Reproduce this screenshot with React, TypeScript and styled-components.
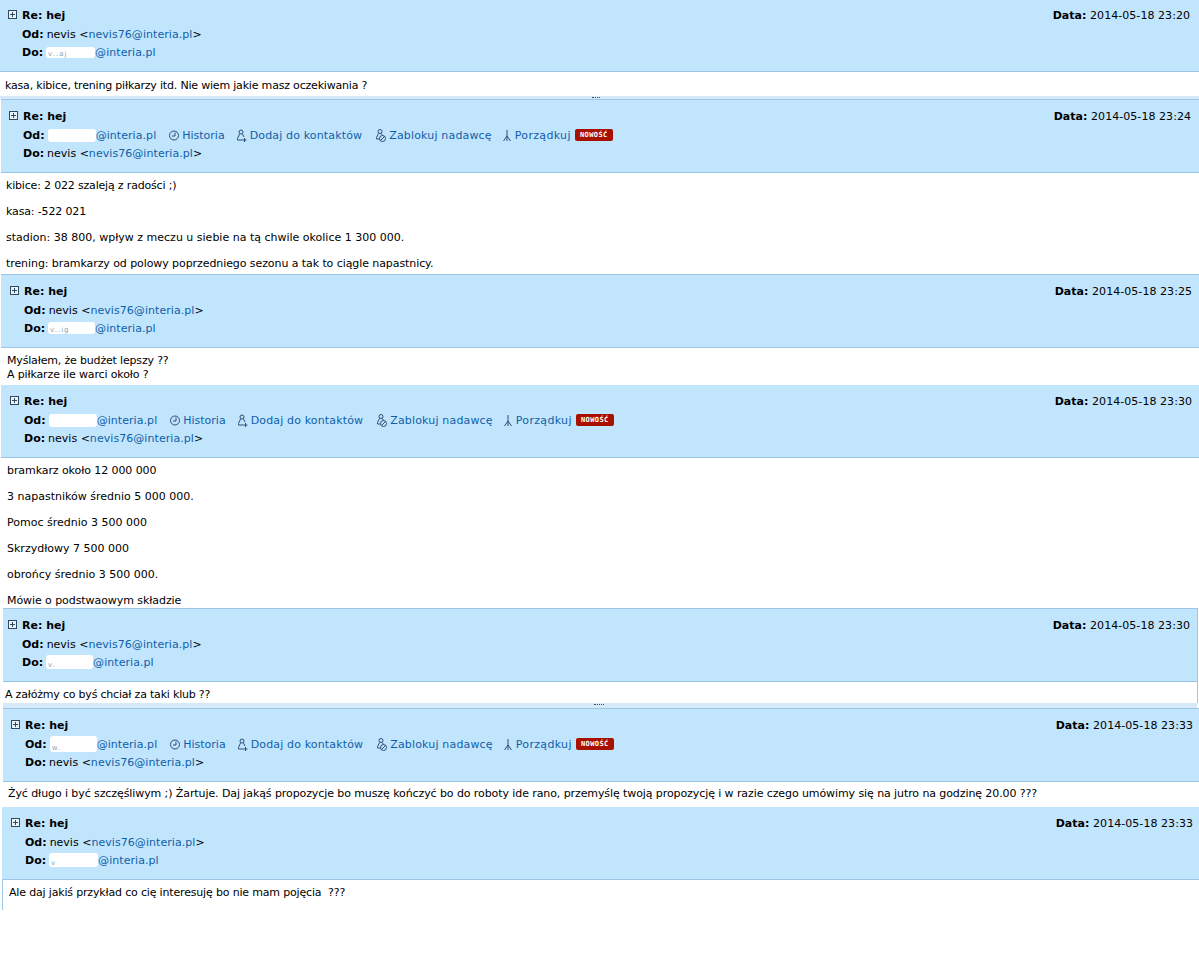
import React from 'react'
import styled, { createGlobalStyle } from 'styled-components'

const GlobalStyle = createGlobalStyle`
  html, body {
    margin: 0;
    padding: 0;
    background: #fff;
  }
  body {
    font-family: "DejaVu Sans", Tahoma, sans-serif;
    font-size: 11px;
    color: #000;
  }
`

const Page = styled.div`
  width: 1199px;
  height: 977px;
  overflow: hidden;
`

const Message = styled.div<{ $edge: number; $inset: number }>`
  margin-left: ${p => p.$edge}px;
  margin-right: ${p => p.$inset}px;
`

const Header = styled.div<{ $top: number; $border: boolean; $pad: number; $end: number; $closed?: boolean }>`
  display: flex;
  justify-content: space-between;
  background: #c2e5fe;
  border-bottom: 1px solid #9cc6e6;
  border-top: ${p => (p.$border ? '1px solid #9cc6e6' : 'none')};
  border-right: ${p => (p.$closed ? '1px solid #9cc6e6' : 'none')};
  padding: ${p => p.$top}px ${p => p.$end}px 10px ${p => p.$pad}px;
`

const Fields = styled.div`
  display: flex;
  flex-direction: column;
`

const TitleRow = styled.div`
  display: flex;
  align-items: center;
  height: 18px;
  margin-bottom: 1px;
  font-weight: bold;
`

const ExpandBox = styled.svg`
  width: 9px;
  height: 9px;
  margin: -2px 5px 0 0;
  flex: none;
`

const FieldRow = styled.div`
  display: flex;
  align-items: center;
  height: 18px;
  margin-left: 14px;
  white-space: pre;
`

const Label = styled.b`
  margin-right: 3px;
`

const Mail = styled.a`
  color: #0f5fa8;
  text-decoration: none;
  letter-spacing: 0.06px;
`

const Redacted = styled.span<{ $width: number; $height: number }>`
  display: inline-flex;
  align-items: flex-end;
  width: ${p => p.$width}px;
  height: ${p => p.$height}px;
  background: #fff;
  border-radius: 3px;
  overflow: hidden;
`

const Remnant = styled.span`
  color: #7f9fb8;
  font-size: 7px;
  line-height: 7px;
  letter-spacing: 1px;
  padding-left: 2px;
`

const Action = styled.a<{ $gap: number; $tracking?: number }>`
  display: inline-flex;
  align-items: center;
  margin-left: ${p => p.$gap}px;
  color: #0f5fa8;
  text-decoration: none;
  letter-spacing: ${p => p.$tracking ?? 0}px;
`

const ActionIcon = styled.svg`
  width: 10px;
  height: 13px;
  margin-right: 3px;
  flex: none;
`

const NewBadge = styled.span`
  margin-left: 4px;
  width: 38px;
  height: 12px;
  line-height: 12px;
  background: #a81000;
  border-radius: 2px;
  color: #fff;
  font-family: "DejaVu Sans Mono", monospace;
  font-size: 7px;
  font-weight: bold;
  letter-spacing: 0.4px;
  text-align: center;
`

const DateText = styled.div`
  height: 18px;
  margin-top: 1px;
  line-height: 18px;
  white-space: pre;
  letter-spacing: 0.05px;
`

const Body = styled.div<{ $top: number; $bottom: number; $pad: number; $gap: number; $rule?: boolean; $closed?: boolean }>`
  display: flex;
  flex-direction: column;
  gap: ${p => p.$gap}px;
  padding: ${p => p.$top}px 0 ${p => p.$bottom}px ${p => p.$pad}px;
  border-left: ${p => (p.$rule ? '1px solid #9cc6e6' : 'none')};
  border-right: ${p => (p.$closed ? '1px solid #9cc6e6' : 'none')};
  background: #fff;
`

const Line = styled.div<{ $tracking: number }>`
  height: 14px;
  line-height: 14px;
  white-space: pre;
  letter-spacing: ${p => p.$tracking}px;
`

const Strip = styled.div<{ $height: number; $closed?: boolean }>`
  display: flex;
  height: ${p => p.$height}px;
  background: #d6e9f8;
  margin-right: ${p => (p.$closed ? 1 : 0)}px;
`

const Grip = styled.span<{ $at: number; $width: number }>`
  width: ${p => p.$width}px;
  height: 1px;
  margin: 1px 0 0 ${p => p.$at}px;
  border-top: 1px dotted #38506a;
`

const PlusBox = () => (
  <ExpandBox viewBox="0 0 9 9">
    <rect x=".5" y=".5" width="8" height="8" fill="#e8f3fb" stroke="#33495e" />
    <path d="M2 4.5h5M4.5 2v5" stroke="#33495e" fill="none" />
  </ExpandBox>
)

const ClockIcon = () => (
  <ActionIcon viewBox="0 0 10 13">
    <circle cx="5" cy="6.5" r="4.5" fill="none" stroke="#2a4f78" />
    <path d="M6 3.5v3.5H3" fill="none" stroke="#2a4f78" />
  </ActionIcon>
)

const AddPersonIcon = () => (
  <ActionIcon viewBox="0 0 10 13">
    <circle cx="4" cy="3" r="2" fill="none" stroke="#2a4f78" />
    <path d="M2.5 5L.5 9.5v1.5h5M5.5 5L7 8" fill="none" stroke="#2a4f78" />
    <path d="M5.5 11h4M7.5 9v4" fill="none" stroke="#2a4f78" />
  </ActionIcon>
)

const BlockPersonIcon = () => (
  <ActionIcon viewBox="0 0 10 13">
    <circle cx="4" cy="2.5" r="2" fill="none" stroke="#2a4f78" />
    <path d="M2.5 4.5L.5 8.5V10h3M5.5 4.5l1 2" fill="none" stroke="#2a4f78" />
    <circle cx="6.5" cy="9.5" r="3" fill="none" stroke="#2a4f78" />
    <path d="M4.5 11.5l4-4" fill="none" stroke="#2a4f78" />
  </ActionIcon>
)

const BroomIcon = () => (
  <ActionIcon viewBox="0 0 10 13">
    <path d="M5 1v6M5 7L1.5 12M5 7v5M5 7l3.5 5" fill="none" stroke="#2a4f78" />
  </ActionIcon>
)

type Mailbox = { width: number; height: number; remnant: string } | null

type TextLine = { text: string; tracking?: number }

type Item = {
  id: number
  edge: number
  inset?: number
  text: number
  pad: number
  end: number
  top: number
  border: boolean
  date: string
  sender: Mailbox
  recipient: Mailbox
  lines: TextLine[]
  gap: number
  bodyTop: number
  bodyBottom: number
  rule?: boolean
  strip?: { height: number; at: number; width: number }
}

const items: Item[] = [
  {
    id: 1, edge: 0, text: 5, pad: 8, end: 9, top: 6, border: false, date: '2014-05-18 23:20',
    sender: null, recipient: { width: 49, height: 11, remnant: 'v..aj' },
    lines: [{ text: 'kasa, kibice, trening piłkarzy itd. Nie wiem jakie masz oczekiwania ?', tracking: -0.19 }],
    gap: 12, bodyTop: 7, bodyBottom: 3, strip: { height: 3, at: 592, width: 8 },
  },
  {
    id: 2, edge: 1, text: 5, pad: 8, end: 8, top: 7, border: true, date: '2014-05-18 23:24',
    sender: { width: 48, height: 13, remnant: '' }, recipient: null,
    lines: [
      { text: 'kibice: 2 022 szaleją z radości ;)', tracking: -0.18 },
      { text: 'kasa: -522 021', tracking: -0.14 },
      { text: 'stadion: 38 800, wpływ z meczu u siebie na tą chwile okolice 1 300 000.' },
      { text: 'trening: bramkarzy od polowy poprzedniego sezonu a tak to ciągle napastnicy.', tracking: -0.08 },
    ],
    gap: 12, bodyTop: 6, bodyBottom: 3,
  },
  {
    id: 3, edge: 1, text: 6, pad: 9, end: 7, top: 7, border: true, date: '2014-05-18 23:25',
    sender: null, recipient: { width: 47, height: 12, remnant: 'v..ig' },
    lines: [
      { text: 'Myślałem, że budżet lepszy ??', tracking: -0.17 },
      { text: 'A piłkarze ile warci około ?', tracking: -0.14 },
    ],
    gap: 0, bodyTop: 6, bodyBottom: 3,
  },
  {
    id: 4, edge: 1, text: 6, pad: 9, end: 7, top: 7, border: false, date: '2014-05-18 23:30',
    sender: { width: 48, height: 13, remnant: '' }, recipient: null,
    lines: [
      { text: 'bramkarz około 12 000 000', tracking: -0.08 },
      { text: '3 napastników średnio 5 000 000.' },
      { text: 'Pomoc średnio 3 500 000' },
      { text: 'Skrzydłowy 7 500 000' },
      { text: 'obrońcy średnio 3 500 000.' },
      { text: 'Mówie o podstwaowym składzie', tracking: -0.07 },
    ],
    gap: 12, bodyTop: 6, bodyBottom: 0,
  },
  {
    id: 5, edge: 3, inset: 1, text: 2, pad: 5, end: 7, top: 7, border: true, date: '2014-05-18 23:30',
    sender: null, recipient: { width: 47, height: 14, remnant: 'v.' },
    lines: [{ text: 'A załóżmy co byś chciał za taki klub ??', tracking: -0.2 }],
    gap: 12, bodyTop: 6, bodyBottom: 1, strip: { height: 5, at: 591, width: 10 },
  },
  {
    id: 6, edge: 3, text: 5, pad: 8, end: 6, top: 7, border: true, date: '2014-05-18 23:33',
    sender: { width: 47, height: 16, remnant: 'w.' }, recipient: null,
    lines: [{ text: 'Żyć długo i być szczęśliwym ;) Żartuje. Daj jakąś propozycje bo muszę kończyć bo do roboty ide rano, przemyślę twoją propozycję i w razie czego umówimy się na jutro na godzinę 20.00 ???', tracking: -0.09 }],
    gap: 12, bodyTop: 5, bodyBottom: 6,
  },
  {
    id: 7, edge: 2, text: 6, pad: 9, end: 6, top: 7, border: false, date: '2014-05-18 23:33',
    sender: null, recipient: { width: 49, height: 14, remnant: 'v' },
    lines: [{ text: 'Ale daj jakiś przykład co cię interesuję bo nie mam pojęcia  ???', tracking: -0.17 }],
    gap: 12, bodyTop: 6, bodyBottom: 10, rule: true,
  },
]

const Address: React.FC<{ box: Mailbox; name: string }> = ({ box, name }) =>
  box ? (
    <>
      <Redacted $width={box.width} $height={box.height}>
        <Remnant>{box.remnant}</Remnant>
      </Redacted>
      <Mail>@interia.pl</Mail>
    </>
  ) : (
    <>
      {name} &lt;<Mail>nevis76@interia.pl</Mail>&gt;
    </>
  )

const App: React.FC = () => (
  <Page>
    <GlobalStyle />
    {items.map(item => (
      <Message key={item.id} $edge={item.edge} $inset={item.inset ?? 0}>
        <Header $top={item.top} $border={item.border} $pad={item.pad} $end={item.end} $closed={!!item.inset}>
          <Fields>
            <TitleRow>
              <PlusBox />
              Re: hej
            </TitleRow>
            <FieldRow>
              <Label>Od:</Label>
              <Address box={item.sender} name="nevis" />
              {item.sender && (
                <>
                  <Action $gap={13}>
                    <ClockIcon />
                    Historia
                  </Action>
                  <Action $gap={12} $tracking={0.15}>
                    <AddPersonIcon />
                    Dodaj do kontaktów
                  </Action>
                  <Action $gap={14} $tracking={0.17}>
                    <BlockPersonIcon />
                    Zablokuj nadawcę
                  </Action>
                  <Action $gap={10} $tracking={0.33}>
                    <BroomIcon />
                    Porządkuj
                  </Action>
                  <NewBadge>NOWOŚĆ</NewBadge>
                </>
              )}
            </FieldRow>
            <FieldRow>
              <Label>Do:</Label>
              <Address box={item.recipient} name="nevis" />
            </FieldRow>
          </Fields>
          <DateText>
            <b>Data:</b> {item.date}
          </DateText>
        </Header>
        <Body
          $top={item.bodyTop}
          $bottom={item.bodyBottom}
          $pad={item.text}
          $gap={item.gap}
          $rule={item.rule}
          $closed={!!item.inset}
        >
          {item.lines.map(line => (
            <Line key={line.text} $tracking={line.tracking ?? 0}>
              {line.text}
            </Line>
          ))}
        </Body>
        {item.strip && (
          <Strip $height={item.strip.height} $closed={!!item.inset}>
            <Grip $at={item.strip.at} $width={item.strip.width} />
          </Strip>
        )}
      </Message>
    ))}
  </Page>
)

export default App
